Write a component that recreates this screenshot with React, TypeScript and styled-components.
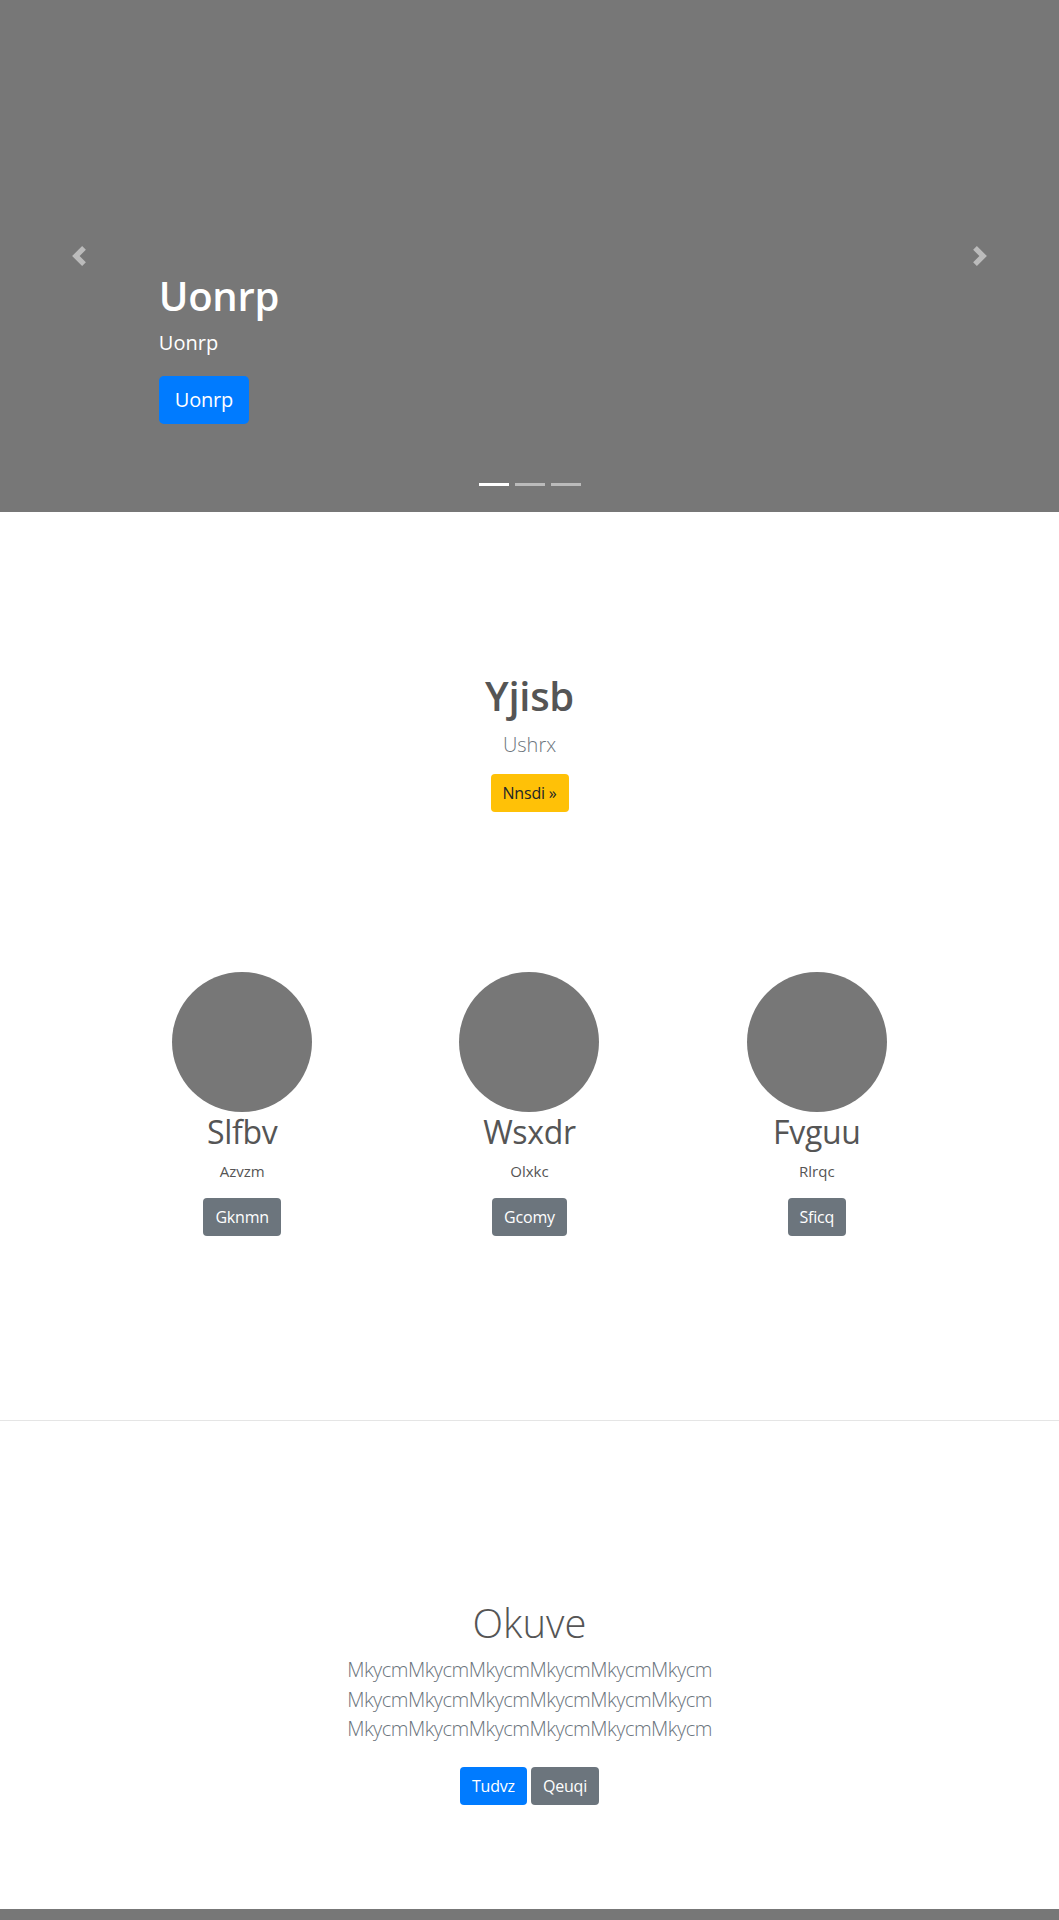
import React from "react";
import styled, { createGlobalStyle } from "styled-components";

const FONT = `"Open Sans", "Noto Sans", "Liberation Sans", sans-serif`;

const Global = createGlobalStyle`
  * { box-sizing: border-box; }
  html, body { margin: 0; padding: 0; background: #fff; }
  body { font-family: ${FONT}; font-size: 16px; line-height: 1.5; color: #212529; }
`;

const Page = styled.div`
  width: 100%;
  display: flex;
  flex-direction: column;
`;

const Carousel = styled.section`
  position: relative;
  height: 512px;
  background: #777777;
  overflow: hidden;
`;

const Control = styled.button<{ $side: "left" | "right" }>`
  position: absolute;
  top: 0;
  bottom: 0;
  ${(p) => (p.$side === "left" ? "left: 0;" : "right: 0;")}
  width: 15%;
  border: 0;
  background: transparent;
  padding: 0;
  display: flex;
  align-items: center;
  justify-content: center;
  opacity: 0.5;
  cursor: pointer;
`;

const Caption = styled.div`
  position: absolute;
  left: 15%;
  right: 15%;
  bottom: 88px;
  color: #fff;
  text-align: left;
  display: flex;
  flex-direction: column;
  align-items: flex-start;
`;

const CaptionTitle = styled.h1`
  margin: 0;
  font-size: 40px;
  line-height: 48px;
  font-weight: 600;
  letter-spacing: -0.3px;
`;

const CaptionText = styled.p`
  margin: 8px 0 0;
  font-size: 20px;
  line-height: 30px;
  font-weight: 400;
`;

const Button = styled.a<{ $variant: "primary" | "secondary" | "warning"; $size?: "lg" }>`
  display: inline-block;
  text-decoration: none;
  font-family: ${FONT};
  font-weight: 400;
  border-radius: ${(p) => (p.$size === "lg" ? "4.8px" : "4px")};
  font-size: ${(p) => (p.$size === "lg" ? "20px" : "16px")};
  line-height: ${(p) => (p.$size === "lg" ? "30px" : "24px")};
  padding: ${(p) => (p.$size === "lg" ? "9px 16px" : "7px 12px")};
  letter-spacing: -0.2px;
  background: ${(p) =>
    p.$variant === "primary" ? "#007bff" : p.$variant === "warning" ? "#ffc107" : "#6c757d"};
  color: ${(p) => (p.$variant === "warning" ? "#212529" : "#fff")};
`;

const CaptionButton = styled(Button)`
  margin-top: 18px;
`;

const Indicators = styled.ol`
  position: absolute;
  left: 0;
  right: 0;
  bottom: 26px;
  margin: 0;
  padding: 0;
  list-style: none;
  display: flex;
  justify-content: center;
  gap: 6px;
`;

const Indicator = styled.li<{ $active?: boolean }>`
  width: 30px;
  height: 3px;
  background: #fff;
  opacity: ${(p) => (p.$active ? 1 : 0.5)};
`;

const Intro = styled.section`
  display: flex;
  flex-direction: column;
  align-items: center;
  padding-top: 160px;
  text-align: center;
`;

const IntroTitle = styled.h2`
  margin: 0;
  font-size: 40px;
  line-height: 48px;
  font-weight: 600;
  letter-spacing: -0.3px;
  color: #555;
`;

const Lead = styled.p`
  margin: 10px 0 0;
  font-size: 20px;
  line-height: 30px;
  font-weight: 300;
  color: #6c757d;
`;

const IntroButton = styled(Button)`
  margin-top: 14px;
`;

const Features = styled.div`
  margin: 160px auto 0;
  width: 862px;
  display: grid;
  grid-template-columns: repeat(3, 1fr);
`;

const Feature = styled.div`
  display: flex;
  flex-direction: column;
  align-items: center;
  text-align: center;
`;

const Avatar = styled.div`
  width: 140px;
  height: 140px;
  border-radius: 50%;
  background: #777;
`;

const FeatureTitle = styled.h3`
  margin: 1px 0 0;
  font-size: 32px;
  line-height: 38px;
  font-weight: 400;
  letter-spacing: -0.3px;
  color: #555;
`;

const FeatureText = styled.p`
  margin: 9px 0 0;
  font-size: 15px;
  line-height: 22px;
  color: #555;
`;

const FeatureButton = styled(Button)`
  margin-top: 16px;
`;

const Divider = styled.hr`
  margin: 184px 0 0;
  border: 0;
  border-top: 1px solid #e5e5e5;
  height: 0;
`;

const Outro = styled.section`
  display: flex;
  flex-direction: column;
  align-items: center;
  text-align: center;
  padding-top: 178px;
`;

const OutroTitle = styled.h2`
  margin: 0;
  font-size: 40px;
  line-height: 48px;
  font-weight: 300;
  color: #555;
`;

const OutroText = styled.p`
  margin: 8px 0 0;
  max-width: 540px;
  font-size: 20px;
  line-height: 29.5px;
  font-weight: 300;
  letter-spacing: -0.5px;
  color: #6c757d;
`;

const ButtonRow = styled.div`
  margin-top: 23px;
  display: flex;
  gap: 4px;
`;

const Footer = styled.footer`
  margin-top: 104px;
  height: 100px;
  background: #777;
`;

const Chevron = ({ dir }: { dir: "left" | "right" }) => (
  <svg width="20" height="20" viewBox="0 0 8 8" fill="#fff">
    <path
      d={
        dir === "left"
          ? "M5.25 0l-4 4 4 4 1.5-1.5-2.5-2.5 2.5-2.5-1.5-1.5z"
          : "M2.75 0l-1.5 1.5 2.5 2.5-2.5 2.5 1.5 1.5 4-4-4-4z"
      }
    />
  </svg>
);

const features = [
  { title: "Slfbv", text: "Azvzm", button: "Gknmn" },
  { title: "Wsxdr", text: "Olxkc", button: "Gcomy" },
  { title: "Fvguu", text: "Rlrqc", button: "Sficq" },
];

const word = "MkycmMkycmMkycmMkycmMkycmMkycm";

export default function App() {
  return (
    <Page>
      <Global />
      <Carousel>
        <Caption>
          <CaptionTitle>Uonrp</CaptionTitle>
          <CaptionText>Uonrp</CaptionText>
          <CaptionButton $variant="primary" $size="lg">Uonrp</CaptionButton>
        </Caption>
        <Control $side="left" aria-label="Previous">
          <Chevron dir="left" />
        </Control>
        <Control $side="right" aria-label="Next">
          <Chevron dir="right" />
        </Control>
        <Indicators>
          <Indicator $active />
          <Indicator />
          <Indicator />
        </Indicators>
      </Carousel>

      <Intro>
        <IntroTitle>Yjisb</IntroTitle>
        <Lead>Ushrx</Lead>
        <IntroButton $variant="warning">Nnsdi »</IntroButton>
      </Intro>

      <Features>
        {features.map((f) => (
          <Feature key={f.title}>
            <Avatar />
            <FeatureTitle>{f.title}</FeatureTitle>
            <FeatureText>{f.text}</FeatureText>
            <FeatureButton $variant="secondary">{f.button}</FeatureButton>
          </Feature>
        ))}
      </Features>

      <Divider />

      <Outro>
        <OutroTitle>Okuve</OutroTitle>
        <OutroText>
          {word} {word} {word}
        </OutroText>
        <ButtonRow>
          <Button $variant="primary">Tudvz</Button>
          <Button $variant="secondary">Qeuqi</Button>
        </ButtonRow>
      </Outro>

      <Footer />
    </Page>
  );
}
